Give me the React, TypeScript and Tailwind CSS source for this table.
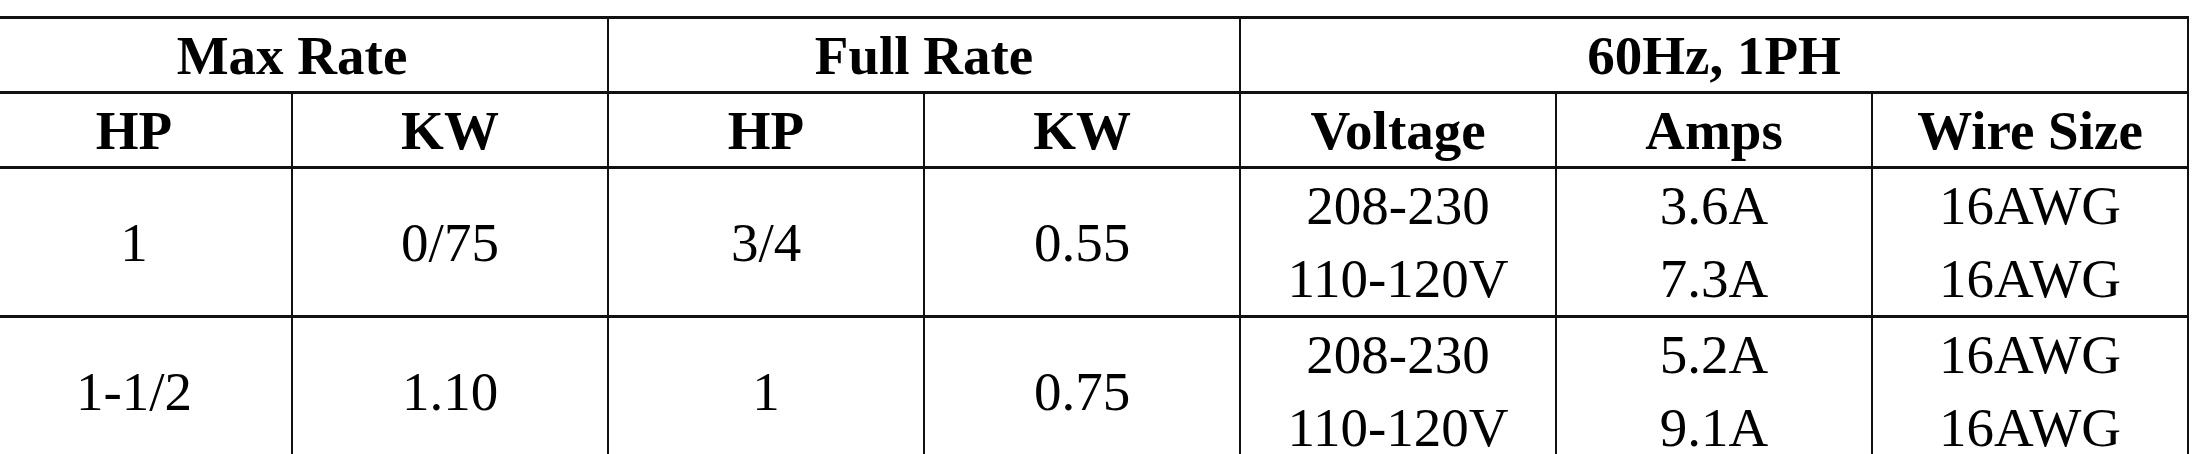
const rows = [
  {
    maxHp: "1",
    maxKw: "0/75",
    fullHp: "3/4",
    fullKw: "0.55",
    volts: ["208-230", "110-120V"],
    amps: ["3.6A", "7.3A"],
    wire: ["16AWG", "16AWG"],
  },
  {
    maxHp: "1-1/2",
    maxKw: "1.10",
    fullHp: "1",
    fullKw: "0.75",
    volts: ["208-230", "110-120V"],
    amps: ["5.2A", "9.1A"],
    wire: ["16AWG", "16AWG"],
  },
];

const cell = "border-y-[3px] border-x-2 border-[#111] text-center align-middle p-0";

function Lines({ items }: { items: string[] }) {
  return (
    <div className="flex flex-col">
      {items.map((t, i) => (
        <span key={i} className="leading-[73px]">
          {t}
        </span>
      ))}
    </div>
  );
}

export default function App() {
  return (
    <div className="w-[2209px] h-[454px] overflow-hidden bg-white pt-[16px]">
      <table
        className="table-fixed border-collapse w-[2212px] ml-[-25px] text-black text-[55px] leading-none"
        style={{ fontFamily: '"Liberation Serif", "Times New Roman", serif' }}
      >
        <colgroup>
          <col className="w-[316px]" />
          <col className="w-[316px]" />
          <col className="w-[316px]" />
          <col className="w-[316px]" />
          <col className="w-[316px]" />
          <col className="w-[316px]" />
          <col className="w-[316px]" />
        </colgroup>
        <thead className="font-bold">
          <tr className="h-[75px]">
            <th colSpan={2} className={cell}>
              Max Rate
            </th>
            <th colSpan={2} className={cell}>
              Full Rate
            </th>
            <th colSpan={3} className={cell}>
              60Hz, 1PH
            </th>
          </tr>
          <tr className="h-[75px]">
            <th className={cell}>HP</th>
            <th className={cell}>KW</th>
            <th className={cell}>HP</th>
            <th className={cell}>KW</th>
            <th className={cell}>Voltage</th>
            <th className={cell}>Amps</th>
            <th className={cell}>Wire Size</th>
          </tr>
        </thead>
        <tbody>
          {rows.map((r, i) => (
            <tr key={i} className="h-[146px]">
              <td className={cell}>{r.maxHp}</td>
              <td className={cell}>{r.maxKw}</td>
              <td className={cell}>{r.fullHp}</td>
              <td className={cell}>{r.fullKw}</td>
              <td className={cell}>
                <Lines items={r.volts} />
              </td>
              <td className={cell}>
                <Lines items={r.amps} />
              </td>
              <td className={cell}>
                <Lines items={r.wire} />
              </td>
            </tr>
          ))}
        </tbody>
      </table>
    </div>
  );
}
